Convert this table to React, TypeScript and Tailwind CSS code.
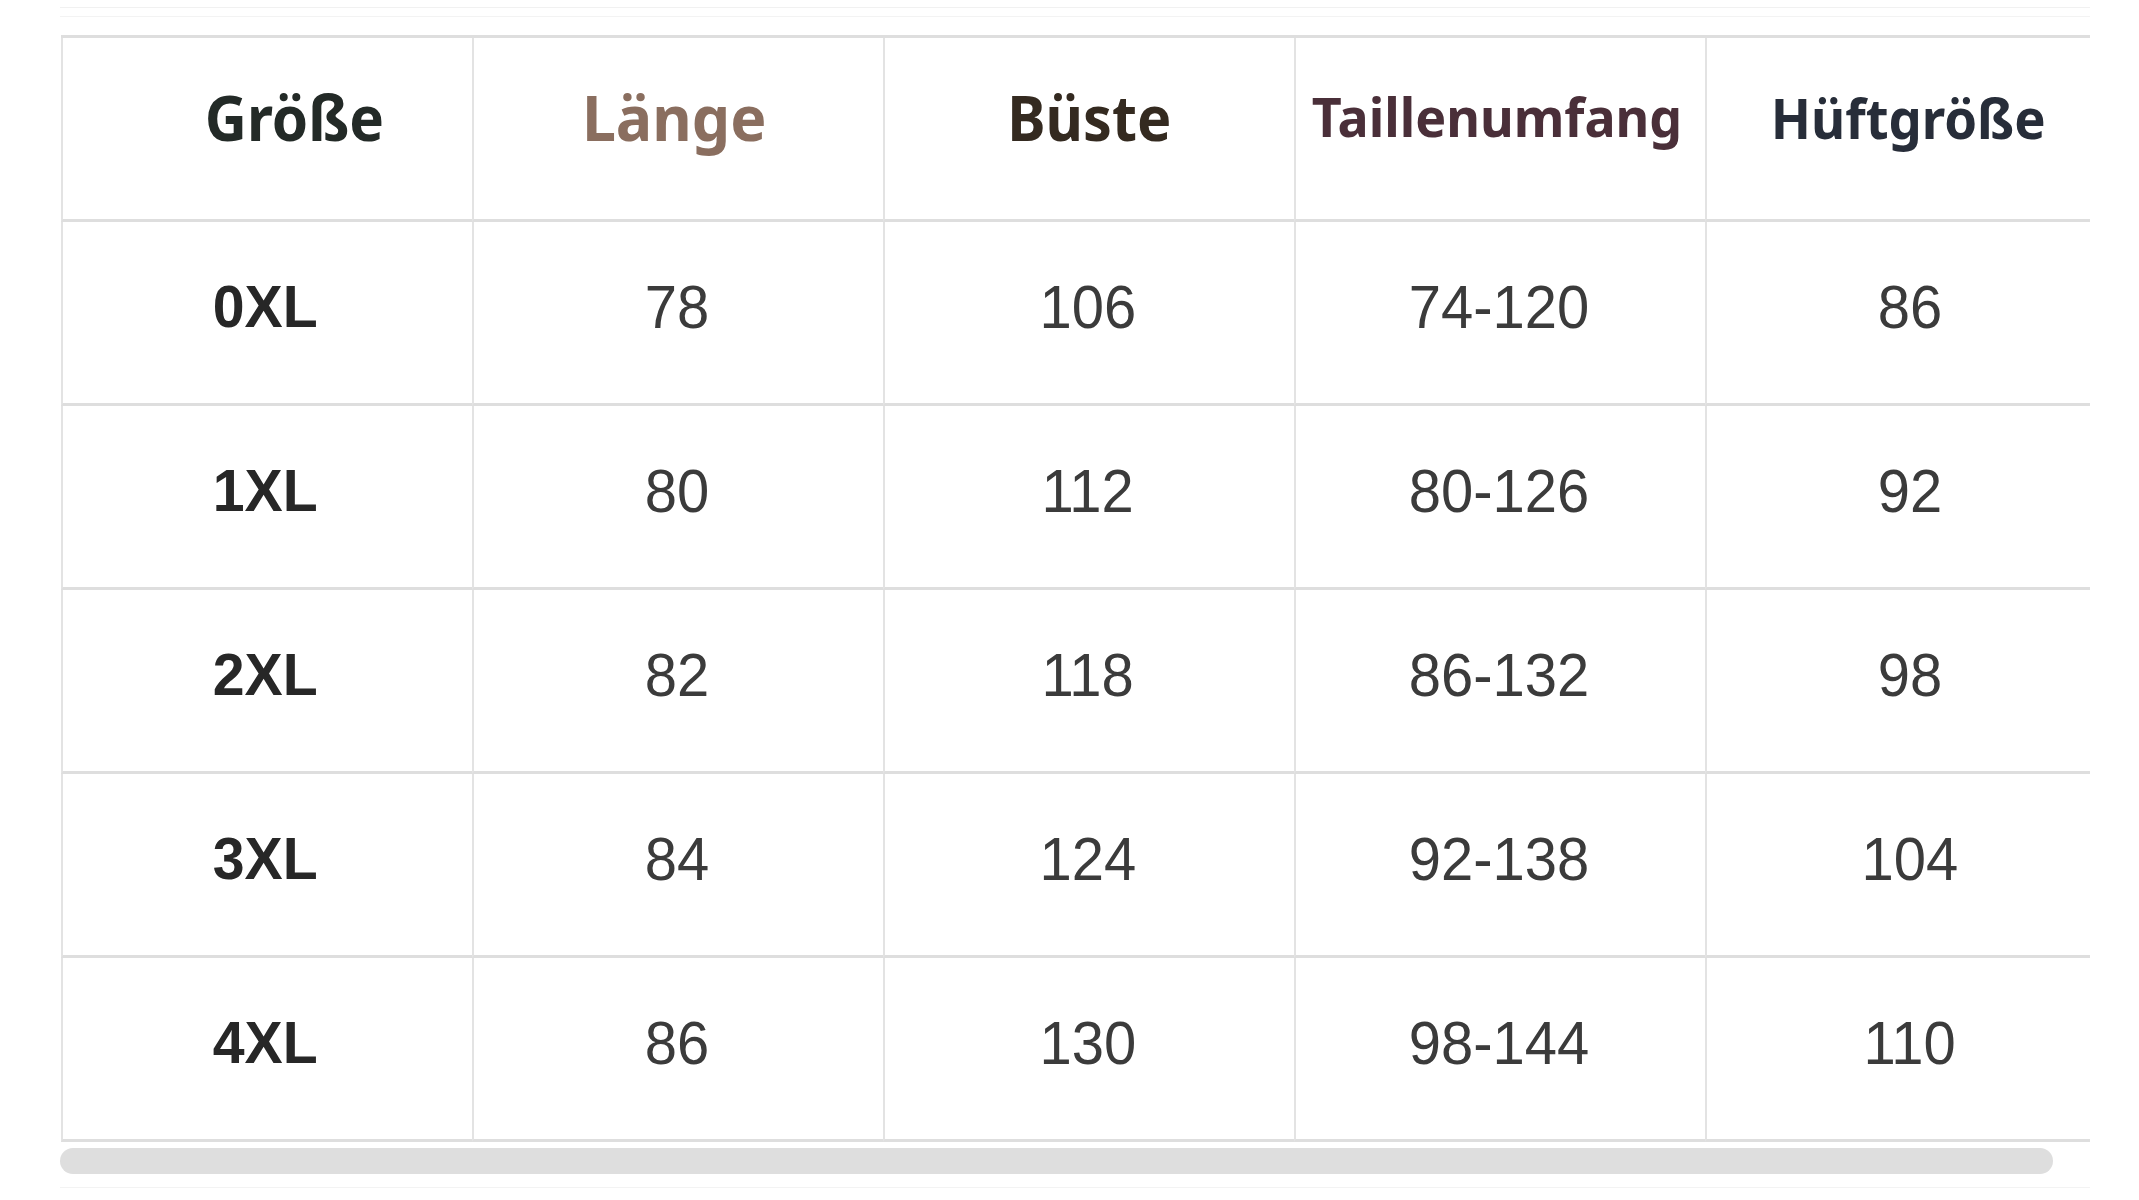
const headers = [
  { label: "Größe", cls: "text-[62px] text-[#232a27] scale-x-[0.94]", cell: "pl-[54px]" },
  { label: "Länge", cls: "text-[62px] text-[#8a6e5f] scale-x-[0.98]", cell: "pr-[8px]" },
  { label: "Büste", cls: "text-[62px] text-[#342a20] scale-x-[0.93]", cell: "" },
  { label: "Taillenumfang", cls: "text-[53px] text-[#4a2f39] scale-x-[0.98]", cell: "pr-[8px]" },
  { label: "Hüftgröße", cls: "text-[56px] text-[#272d39] scale-x-[0.94]", cell: "pr-[6px]" },
];

const rows = [
  ["0XL", "78", "106", "74-120", "86"],
  ["1XL", "80", "112", "80-126", "92"],
  ["2XL", "82", "118", "86-132", "98"],
  ["3XL", "84", "124", "92-138", "104"],
  ["4XL", "86", "130", "98-144", "110"],
];

const cellBase =
  "flex items-center justify-center h-[184px] border-l-2 border-l-[#e3e3e3] border-b-[3px] border-b-[#dedede]";

export default function App() {
  return (
    <div className="w-[2139px] h-[1200px] bg-white overflow-hidden relative">
      <div className="ml-[60px] w-[2030px] overflow-hidden">
        <div className="h-[7px]" />
        <div className="h-px bg-[#f1f1f1]" />
        <div className="h-[8px]" />
        <div className="h-px bg-[#f3f3f3]" />
        <div className="h-[18px]" />
        <div className="ml-px w-[2055px] border-t-[3px] border-t-[#dedede]">
          <div className="grid grid-cols-[repeat(5,411px)]">
            {headers.map((h) => (
              <div key={h.label} className={`${cellBase} pb-[24px] ${h.cell}`}>
                <span
                  className={`inline-block leading-none font-bold whitespace-nowrap font-['Noto_Sans',sans-serif] ${h.cls}`}
                >
                  {h.label}
                </span>
              </div>
            ))}
            {rows.map((r) =>
              r.map((v, i) => (
                <div key={r[0] + i} className={`${cellBase} pb-[10px] ${i === 0 ? "" : "pr-[4px]"}`}>
                  <span
                    className={
                      i === 0
                        ? "inline-block leading-none whitespace-nowrap font-['Liberation_Sans',Arial,sans-serif] font-bold text-[59px] text-[#272727] scale-x-[0.97] pr-[4px]"
                        : "inline-block leading-none whitespace-nowrap font-['Liberation_Sans',Arial,sans-serif] text-[61px] text-[#3b3b3b] scale-x-[0.95]"
                    }
                  >
                    {v}
                  </span>
                </div>
              ))
            )}
          </div>
        </div>
        <div className="h-[6px]" />
        <div className="w-[1993px] h-[26px] rounded-full bg-[#dedede]" />
        <div className="h-[13px]" />
        <div className="h-px bg-[#f3f3f3]" />
      </div>
    </div>
  );
}
